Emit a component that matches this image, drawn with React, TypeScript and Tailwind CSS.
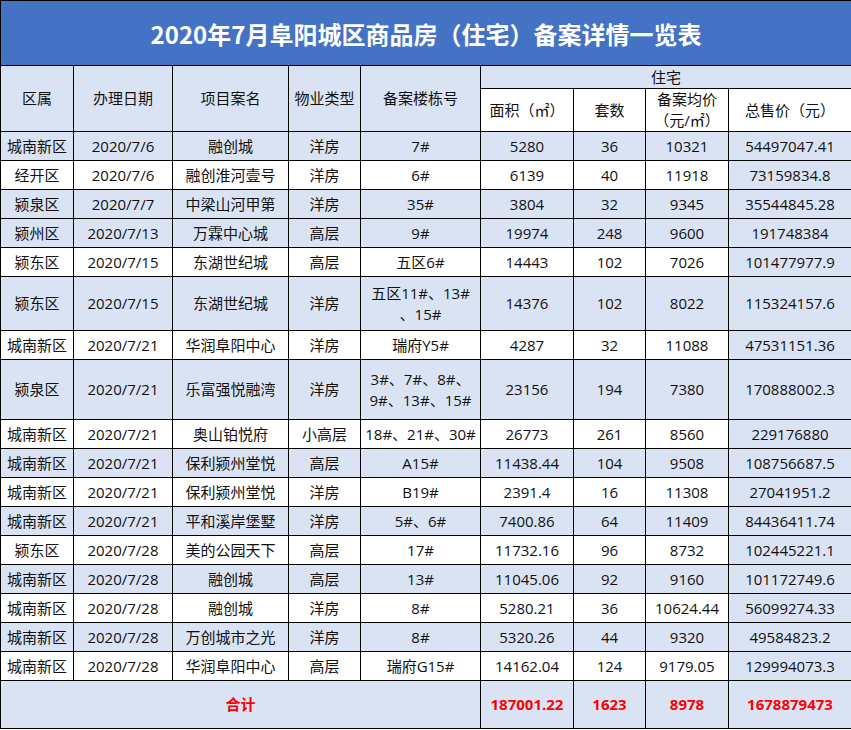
import React from "react";

type TRow = {
  area: string;
  date: string;
  name: string;
  type: string;
  building: React.ReactNode;
  size: string;
  count: string;
  avg: string;
  total: string;
  blue: boolean;
  h: string;
};

const rows: TRow[] = [
  { area: "城南新区", date: "2020/7/6", name: "融创城", type: "洋房", building: "7#", size: "5280", count: "36", avg: "10321", total: "54497047.41", blue: true, h: "h-[29px]" },
  { area: "经开区", date: "2020/7/6", name: "融创淮河壹号", type: "洋房", building: "6#", size: "6139", count: "40", avg: "11918", total: "73159834.8", blue: false, h: "h-[29px]" },
  { area: "颍泉区", date: "2020/7/7", name: "中梁山河甲第", type: "洋房", building: "35#", size: "3804", count: "32", avg: "9345", total: "35544845.28", blue: true, h: "h-[29px]" },
  { area: "颍州区", date: "2020/7/13", name: "万霖中心城", type: "高层", building: "9#", size: "19974", count: "248", avg: "9600", total: "191748384", blue: true, h: "h-[29px]" },
  { area: "颍东区", date: "2020/7/15", name: "东湖世纪城", type: "高层", building: "五区6#", size: "14443", count: "102", avg: "7026", total: "101477977.9", blue: false, h: "h-[29px]" },
  {
    area: "颍东区", date: "2020/7/15", name: "东湖世纪城", type: "洋房",
    building: (<>五区11#、13#<br />、15#</>),
    size: "14376", count: "102", avg: "8022", total: "115324157.6", blue: true, h: "h-[54px]",
  },
  { area: "城南新区", date: "2020/7/21", name: "华润阜阳中心", type: "洋房", building: "瑞府Y5#", size: "4287", count: "32", avg: "11088", total: "47531151.36", blue: false, h: "h-[29px]" },
  {
    area: "颍泉区", date: "2020/7/21", name: "乐富强悦融湾", type: "洋房",
    building: (<>3#、7#、8#、<br />9#、13#、15#</>),
    size: "23156", count: "194", avg: "7380", total: "170888002.3", blue: true, h: "h-[60px]",
  },
  { area: "城南新区", date: "2020/7/21", name: "奥山铂悦府", type: "小高层", building: "18#、21#、30#", size: "26773", count: "261", avg: "8560", total: "229176880", blue: false, h: "h-[29px]" },
  { area: "城南新区", date: "2020/7/21", name: "保利颍州堂悦", type: "高层", building: "A15#", size: "11438.44", count: "104", avg: "9508", total: "108756687.5", blue: true, h: "h-[29px]" },
  { area: "城南新区", date: "2020/7/21", name: "保利颍州堂悦", type: "洋房", building: "B19#", size: "2391.4", count: "16", avg: "11308", total: "27041951.2", blue: false, h: "h-[29px]" },
  { area: "城南新区", date: "2020/7/21", name: "平和溪岸堡墅", type: "洋房", building: "5#、6#", size: "7400.86", count: "64", avg: "11409", total: "84436411.74", blue: true, h: "h-[29px]" },
  { area: "颍东区", date: "2020/7/28", name: "美的公园天下", type: "高层", building: "17#", size: "11732.16", count: "96", avg: "8732", total: "102445221.1", blue: false, h: "h-[29px]" },
  { area: "城南新区", date: "2020/7/28", name: "融创城", type: "高层", building: "13#", size: "11045.06", count: "92", avg: "9160", total: "101172749.6", blue: true, h: "h-[29px]" },
  { area: "城南新区", date: "2020/7/28", name: "融创城", type: "洋房", building: "8#", size: "5280.21", count: "36", avg: "10624.44", total: "56099274.33", blue: false, h: "h-[29px]" },
  { area: "城南新区", date: "2020/7/28", name: "万创城市之光", type: "洋房", building: "8#", size: "5320.26", count: "44", avg: "9320", total: "49584823.2", blue: true, h: "h-[29px]" },
  { area: "城南新区", date: "2020/7/28", name: "华润阜阳中心", type: "高层", building: "瑞府G15#", size: "14162.04", count: "124", avg: "9179.05", total: "129994073.3", blue: false, h: "h-[29px]" },
];

const cell = "border border-black text-center align-middle p-0";

export default function App() {
  return (
    <div className="w-[851px] h-[730px] bg-white">
      <table
        className="w-[851px] table-fixed border-collapse text-[15px] leading-[21px] text-[#111]"
        style={{ fontFamily: '"Open Sans", "Noto Sans CJK SC", sans-serif' }}
      >
        <colgroup>
          <col className="w-[73px]" />
          <col className="w-[99px]" />
          <col className="w-[116px]" />
          <col className="w-[72px]" />
          <col className="w-[120px]" />
          <col className="w-[93px]" />
          <col className="w-[72px]" />
          <col className="w-[83px]" />
          <col className="w-[123px]" />
        </colgroup>
        <tbody>
          <tr className="h-[65px]">
            <td
              colSpan={9}
              className="border border-black bg-[#4472c4] text-center align-middle text-[24px] font-bold text-white"
              style={{ fontFamily: '"Noto Sans CJK SC", sans-serif' }}
            >
              2020年7月阜阳城区商品房（住宅）备案详情一览表
            </td>
          </tr>
          <tr className="h-[23px]">
            <td rowSpan={2} className={`${cell} bg-[#dae3f3]`}>区属</td>
            <td rowSpan={2} className={`${cell} bg-[#dae3f3]`}>办理日期</td>
            <td rowSpan={2} className={`${cell} bg-[#dae3f3]`}>项目案名</td>
            <td rowSpan={2} className={`${cell} bg-[#dae3f3]`}>物业类型</td>
            <td rowSpan={2} className={`${cell} bg-[#dae3f3]`}>备案楼栋号</td>
            <td colSpan={4} className={`${cell} bg-[#dae3f3]`}>住宅</td>
          </tr>
          <tr className="h-[43px]">
            <td className={`${cell} bg-white`}>面积（㎡）</td>
            <td className={`${cell} bg-white`}>套数</td>
            <td className={`${cell} bg-white`}>
              备案均价
              <br />
              （元/㎡）
            </td>
            <td className={`${cell} bg-white`}>总售价（元）</td>
          </tr>
          {rows.map((r, i) => {
            const bg = r.blue ? "bg-[#dae3f3]" : "bg-white";
            return (
              <tr key={i} className={r.h}>
                <td className={`${cell} ${bg}`}>{r.area}</td>
                <td className={`${cell} ${bg}`}>{r.date}</td>
                <td className={`${cell} ${bg}`}>{r.name}</td>
                <td className={`${cell} ${bg}`}>{r.type}</td>
                <td className={`${cell} ${bg}`}>{r.building}</td>
                <td className={`${cell} ${bg}`}>{r.size}</td>
                <td className={`${cell} ${bg}`}>{r.count}</td>
                <td className={`${cell} ${bg}`}>{r.avg}</td>
                <td className={`${cell} bg-[#dae3f3]`}>{r.total}</td>
              </tr>
            );
          })}
          <tr className="h-[48px] font-bold text-[#ff0000]">
            <td colSpan={5} className={`${cell} bg-[#dae3f3]`}>合计</td>
            <td className={`${cell} bg-[#dae3f3]`}>187001.22</td>
            <td className={`${cell} bg-[#dae3f3]`}>1623</td>
            <td className={`${cell} bg-[#dae3f3]`}>8978</td>
            <td className={`${cell} bg-[#dae3f3]`}>1678879473</td>
          </tr>
        </tbody>
      </table>
    </div>
  );
}
